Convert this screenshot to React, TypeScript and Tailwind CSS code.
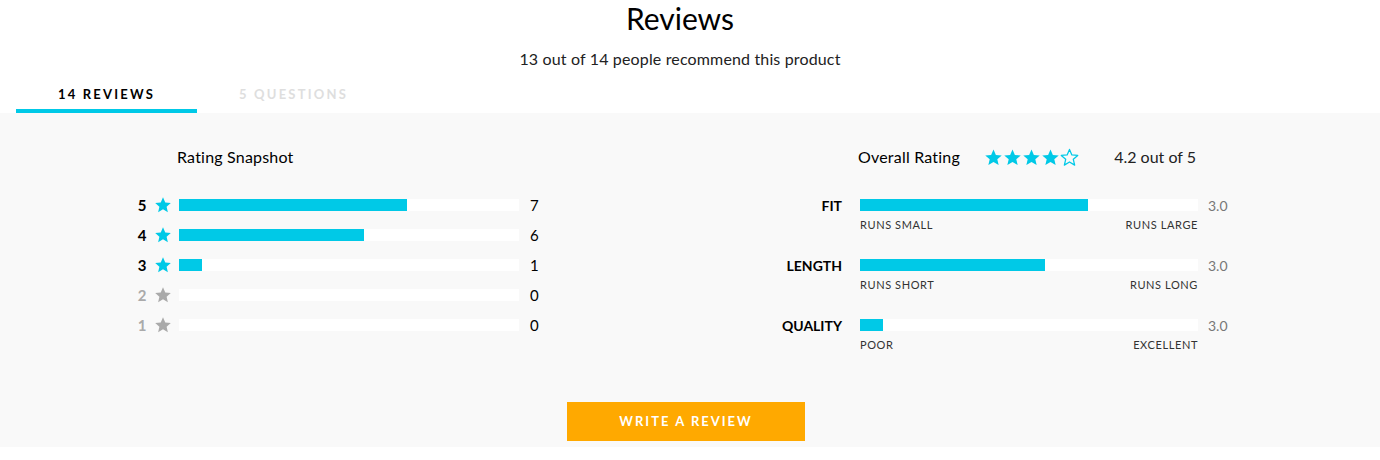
const CYAN = "#00c9e7"

function Star({ color = CYAN, outline = false, size = 16 }: { color?: string; outline?: boolean; size?: number }) {
  return (
    <svg width={size} height={size} viewBox="0 0 24 24" className="shrink-0">
      <path
        d="M12 1.8l3 7 7.4.6-5.6 4.9 1.7 7.3L12 17.7l-6.5 3.9 1.7-7.3L1.6 9.4 9 8.8z"
        fill={outline ? "none" : color}
        stroke={color}
        strokeWidth={outline ? 1.6 : 0}
        strokeLinejoin="round"
      />
    </svg>
  )
}

const snapshot = [
  { stars: 5, fill: 228, count: 7 },
  { stars: 4, fill: 185, count: 6 },
  { stars: 3, fill: 23, count: 1 },
  { stars: 2, fill: 0, count: 0 },
  { stars: 1, fill: 0, count: 0 },
]

const sliders = [
  { name: "FIT", fill: 228, low: "RUNS SMALL", high: "RUNS LARGE" },
  { name: "LENGTH", fill: 185, low: "RUNS SHORT", high: "RUNS LONG" },
  { name: "QUALITY", fill: 23, low: "POOR", high: "EXCELLENT" },
]

export default function App() {
  return (
    <div className="w-[1380px] h-[460px] bg-white text-[#111] font-['Lato','Open_Sans',sans-serif] overflow-hidden">
      {/* Heading */}
      <div className="flex flex-col items-center pr-5">
        <h1 className="text-[30px] leading-[36px] text-black">Reviews</h1>
        <p className="text-[16px] leading-5 mt-[13px] tracking-[0.15px] text-[#222]">
          13 out of 14 people recommend this product
        </p>
      </div>

      {/* Tabs */}
      <div className="flex pl-4 mt-[17px]">
        <div className="w-[181px] h-[27px] flex items-start justify-center border-b-4 border-[#00c9e7]">
          <span className="text-[13px] leading-4 font-bold tracking-[2.2px] text-black">14 REVIEWS</span>
        </div>
        <div className="w-[181px] h-[27px] pl-3 flex items-start justify-center">
          <span className="text-[13px] leading-4 font-bold tracking-[2.2px] text-[#dedede]">5 QUESTIONS</span>
        </div>
      </div>

      {/* Panel */}
      <div className="bg-[#f9f9f9] h-[334px] pt-[34px] flex flex-col">
        <div className="flex">
          {/* Rating snapshot */}
          <div className="ml-[136px] w-[412px]">
            <div className="pl-[41px] text-[16px] leading-5 tracking-[0.2px] text-black">Rating Snapshot</div>
            <div className="mt-[23px] flex flex-col">
              {snapshot.map((r) => {
                const active = r.count > 0
                return (
                  <div key={r.stars} className="h-[30px] flex items-center">
                    <span className={`w-[12px] text-[15px] font-bold text-center ${active ? "text-black" : "text-[#aaa]"}`}>
                      {r.stars}
                    </span>
                    <span className="ml-[6px]">
                      <Star color={active ? CYAN : "#aaa"} size={18} />
                    </span>
                    <div className="ml-[7px] w-[340px] h-[12px] bg-white">
                      <div className="h-full bg-[#00c9e7]" style={{ width: r.fill }} />
                    </div>
                    <span className="ml-[11px] text-[15px] text-black">{r.count}</span>
                  </div>
                )
              })}
            </div>
          </div>

          {/* Overall + sliders */}
          <div className="ml-[212px] flex flex-col">
            <div className="ml-[98px] w-[338px] h-5 flex items-center">
              <span className="text-[16px] leading-5 tracking-[0.2px] text-black">Overall Rating</span>
              <div className="ml-6 flex">
                <Star size={19} />
                <Star size={19} />
                <Star size={19} />
                <Star size={19} />
                <Star size={19} outline />
              </div>
              <span className="ml-auto text-[16px] leading-5 text-[#222]">4.2 out of 5</span>
            </div>
            <div className="mt-[23px] flex flex-col">
              {sliders.map((s) => (
                <div key={s.name} className="h-[60px] flex flex-col">
                  <div className="h-[30px] flex items-center">
                    <span className="w-[82px] text-right text-[14px] font-bold text-black">{s.name}</span>
                    <div className="ml-[18px] w-[338px] h-[12px] bg-white">
                      <div className="h-full bg-[#00c9e7]" style={{ width: s.fill }} />
                    </div>
                    <span className="ml-[10px] text-[14px] text-[#777]">3.0</span>
                  </div>
                  <div className="ml-[100px] w-[338px] -mt-[1px] flex justify-between text-[11px] leading-3 tracking-[0.6px] text-[#333]">
                    <span>{s.low}</span>
                    <span>{s.high}</span>
                  </div>
                </div>
              ))}
            </div>
          </div>
        </div>

        <div className="mt-auto mb-[6px] flex justify-center">
          <button className="w-[238px] h-[39px] mr-2 bg-[#ffa900] text-white text-[13px] font-bold tracking-[2px]">
            WRITE A REVIEW
          </button>
        </div>
      </div>
    </div>
  )
}
